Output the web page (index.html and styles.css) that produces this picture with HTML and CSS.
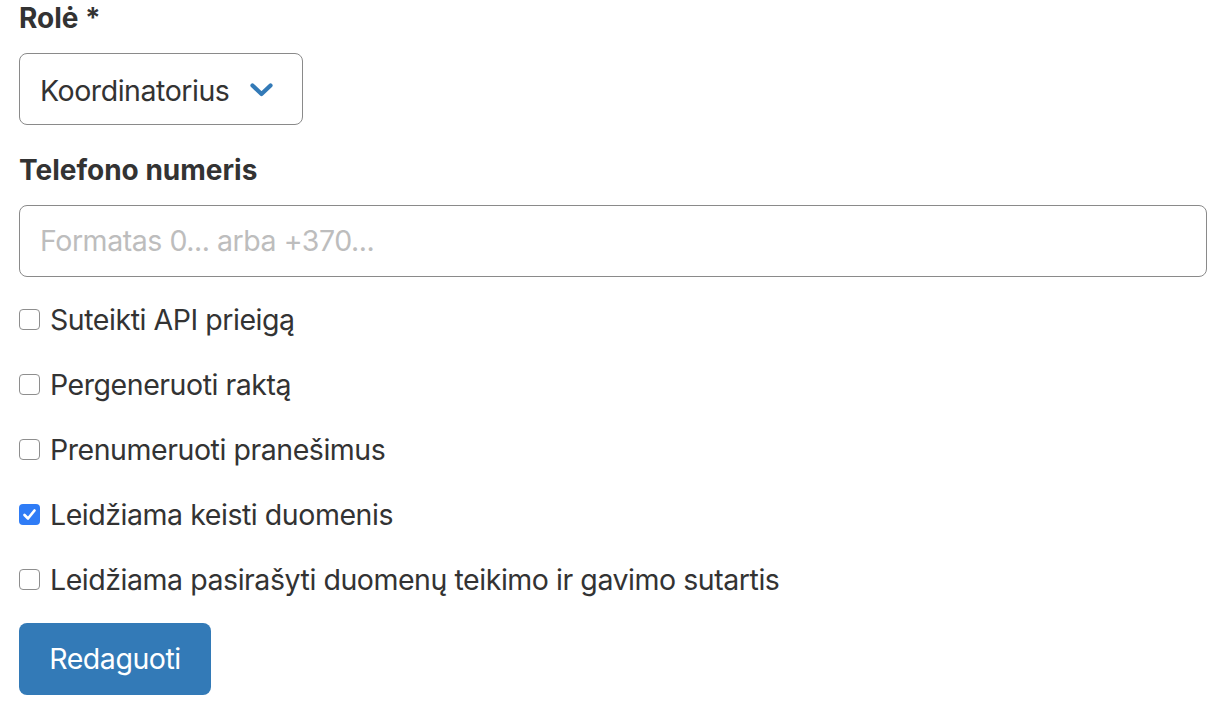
FILE: index.html
```html
<!DOCTYPE html>
<html lang="lt">
<head>
<meta charset="utf-8">
<title>Redaguoti</title>
<link rel="stylesheet" href="styles.css">
</head>
<body>
<form class="form">
  <div class="group group-role">
    <label class="label">Rolė *</label>
    <div class="select">
      <span class="select-text">Koordinatorius</span>
      <svg class="chevron" width="23" height="14" viewBox="0 0 23 14"><polyline points="2.5,2.5 11.5,11 20.5,2.5" fill="none" stroke="#337ab7" stroke-width="4.2" stroke-linecap="round" stroke-linejoin="round"/></svg>
    </div>
  </div>
  <div class="group group-phone">
    <label class="label">Telefono numeris</label>
    <div class="input"><span class="placeholder">Formatas 0... arba +370...</span></div>
  </div>
  <div class="checks">
    <div class="check"><span class="box"></span><span class="check-text">Suteikti API prieigą</span></div>
    <div class="check"><span class="box"></span><span class="check-text">Pergeneruoti raktą</span></div>
    <div class="check"><span class="box"></span><span class="check-text">Prenumeruoti pranešimus</span></div>
    <div class="check"><span class="box box-checked"><svg width="21" height="21" viewBox="0 0 21 21"><polyline points="5.5,11 9,14.5 15.5,6.5" fill="none" stroke="#fff" stroke-width="2.7" stroke-linecap="round" stroke-linejoin="round"/></svg></span><span class="check-text">Leidžiama keisti duomenis</span></div>
    <div class="check"><span class="box"></span><span class="check-text">Leidžiama pasirašyti duomenų teikimo ir gavimo sutartis</span></div>
  </div>
  <div class="actions">
    <span class="button">Redaguoti</span>
  </div>
</form>
</body>
</html>
```

FILE: styles.css
```css
html, body {
  margin: 0;
  padding: 0;
  background: #ffffff;
}

body {
  font-family: Inter, "Liberation Sans", sans-serif;
  color: #333333;
}

.form {
  padding: 0 0 0 19px;
  width: 1188px;
}

.label {
  display: block;
  font-weight: 700;
  font-size: 28px;
  line-height: 36px;
  margin-bottom: 17px;
  color: #333333;
}

.group-role {
  margin-bottom: 27px;
}

.select {
  box-sizing: border-box;
  width: 284px;
  height: 72px;
  border: 1px solid #8a8a8a;
  border-radius: 8px;
  display: flex;
  align-items: center;
  padding: 0 29px 0 20px;
  justify-content: space-between;
}

.select-text {
  font-size: 28.5px;
  letter-spacing: -0.45px;
  line-height: 36px;
  color: #333333;
  padding-top: 3px;
}

.chevron {
  display: block;
  margin-top: 2px;
}

.input {
  box-sizing: border-box;
  height: 72px;
  border: 1px solid #8a8a8a;
  border-radius: 8px;
  display: flex;
  align-items: center;
  padding: 0 20px;
}

.placeholder {
  font-size: 28.5px;
  letter-spacing: -0.45px;
  line-height: 36px;
  color: #bdbdbd;
}

.group-phone {
  margin-bottom: 22px;
}

.checks {
  display: flex;
  flex-direction: column;
  gap: 23px;
}

.check {
  display: flex;
  align-items: flex-start;
  height: 42px;
}

.box {
  box-sizing: border-box;
  width: 21px;
  height: 21px;
  margin: 10px 10px 0 0;
  border: 1px solid #8e8e8e;
  border-radius: 4px;
  background: #ffffff;
  flex: none;
}

.box-checked {
  border: none;
  background: #2f7cf6;
}

.box-checked svg {
  display: block;
}

.check-text {
  font-size: 28.5px;
  letter-spacing: -0.45px;
  line-height: 42px;
  color: #333333;
}

.actions {
  margin-top: 22px;
}

.button {
  display: inline-flex;
  align-items: center;
  justify-content: center;
  box-sizing: border-box;
  width: 192px;
  height: 72px;
  background: #337ab7;
  border-radius: 8px;
  color: #ffffff;
  font-size: 28.5px;
  letter-spacing: -0.45px;
  line-height: 36px;
}
```
